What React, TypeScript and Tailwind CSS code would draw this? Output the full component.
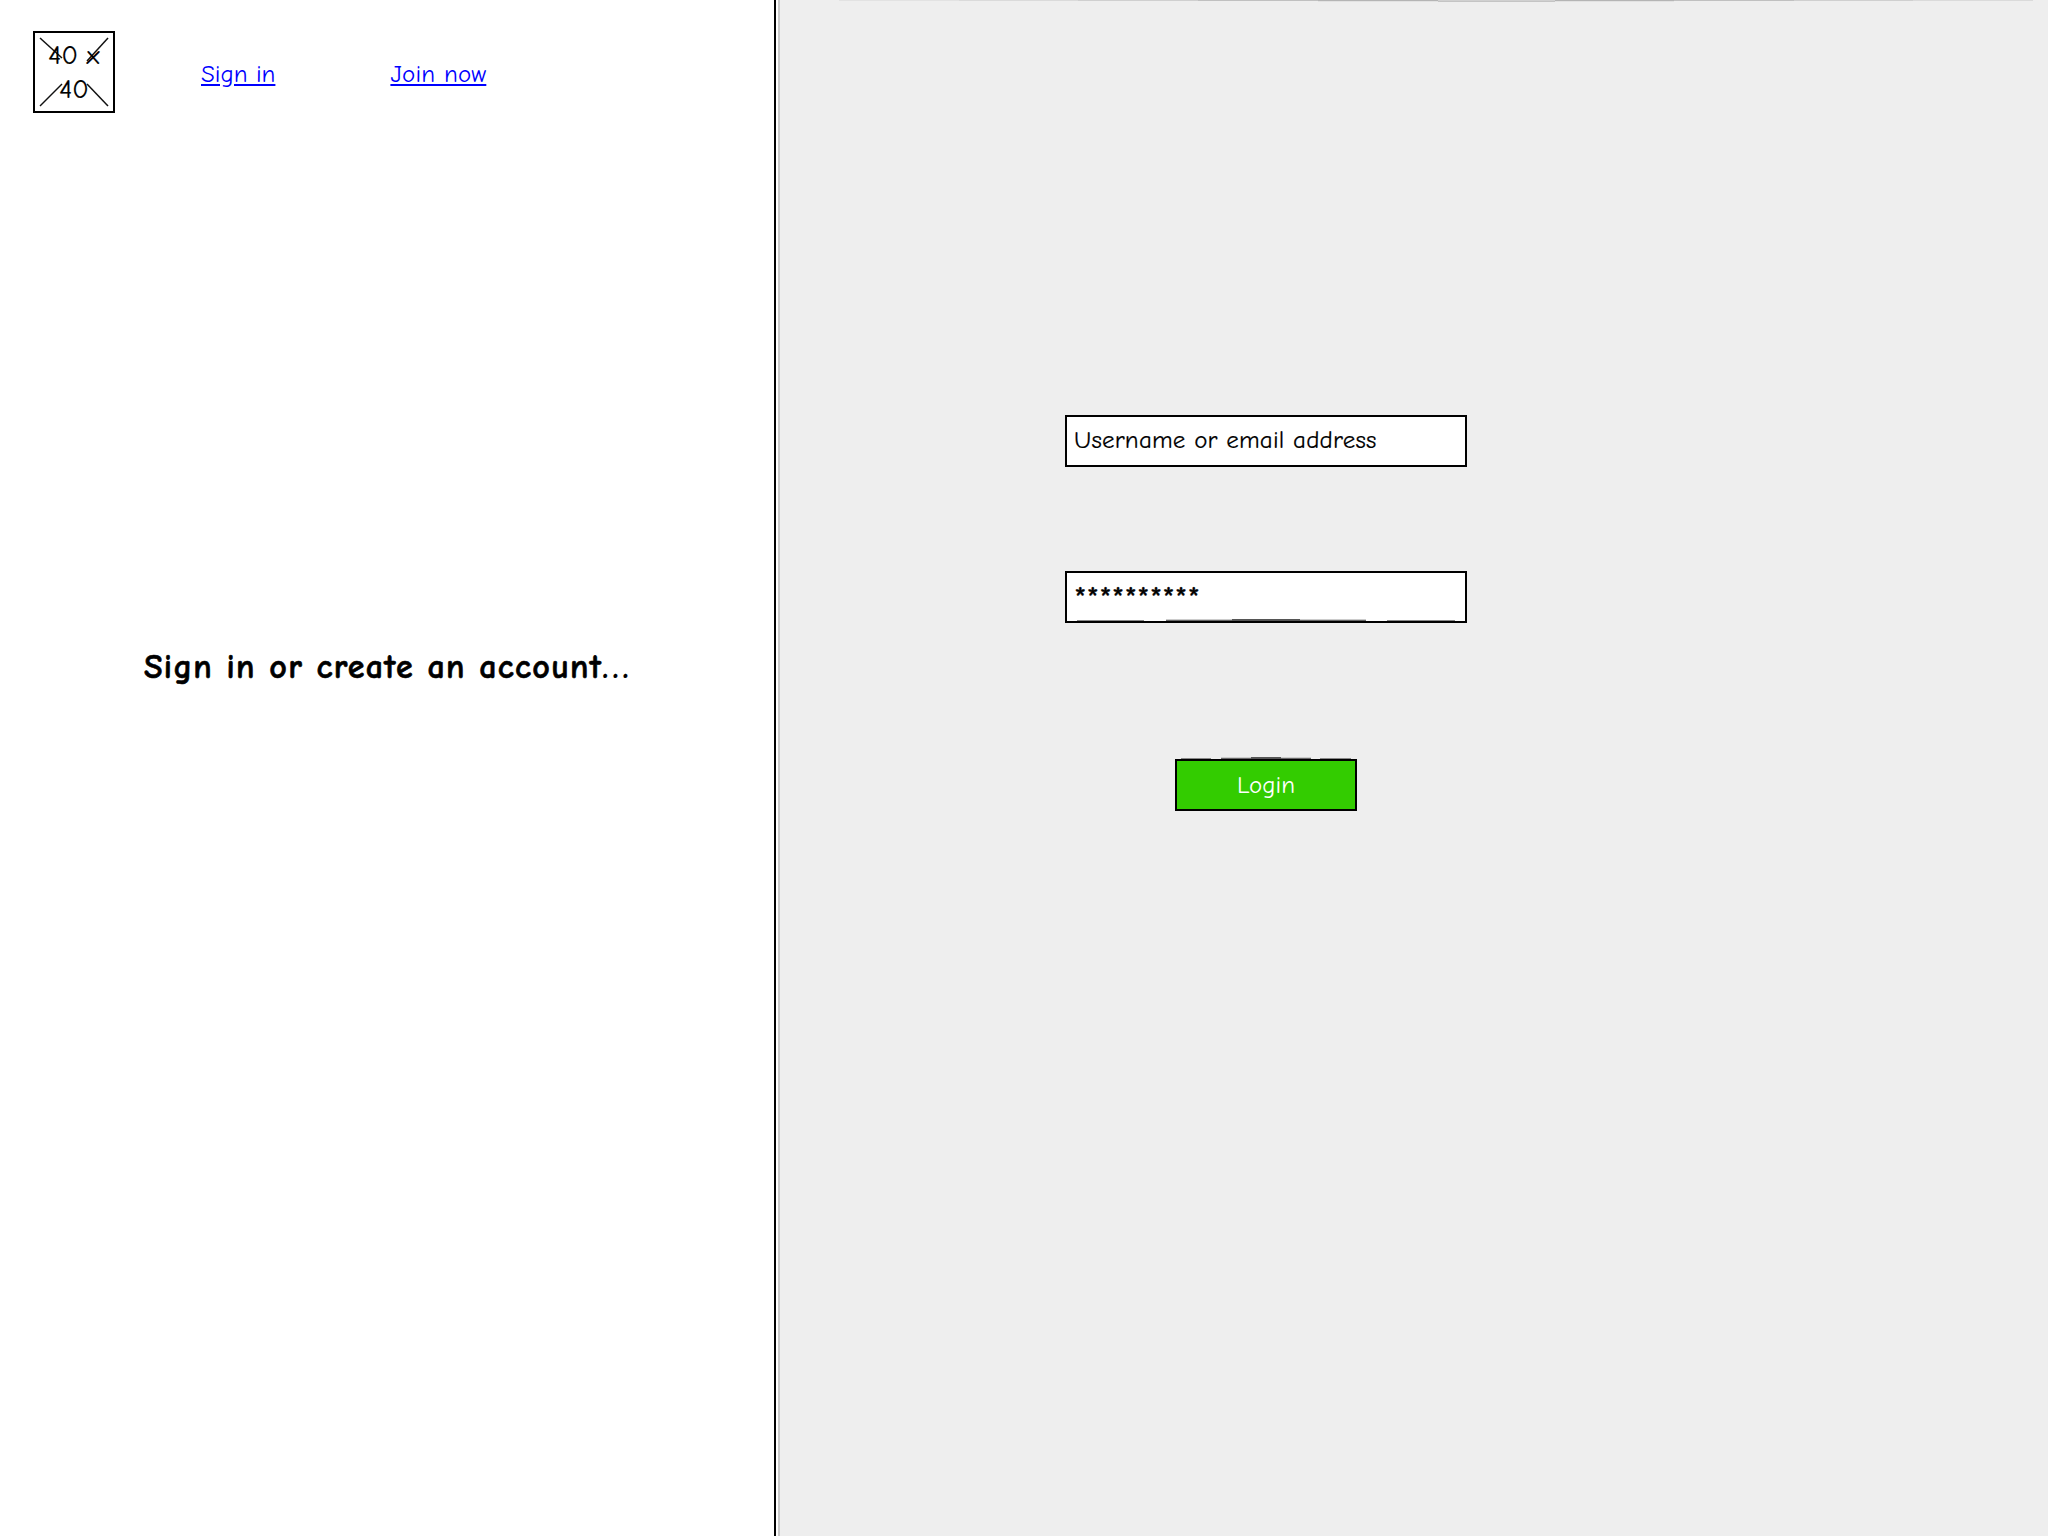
const sketchFont = "font-['Comic_Sans_MS','Comic_Neue','DejaVu_Sans',cursive]";

// segments of the top edge of the right panel: [x, y, width, colour]
const topEdge: [number, number, number, string][] = [
  [0, 0, 120, '#e2e2e2'],
  [120, 0, 119, '#dadada'],
  [239, 0, 120, '#cfcfcf'],
  [359, 0, 120, '#c0c0c0'],
  [479, 0, 120, '#b4b4b4'],
  [479, 1, 120, '#e2e2e2'],
  [599, 1, 117, '#c4c4c4'],
  [599, 0, 117, '#d0d0d0'],
  [716, 0, 119, '#b4b4b4'],
  [716, 1, 119, '#e2e2e2'],
  [835, 0, 120, '#c0c0c0'],
  [955, 0, 119, '#cfcfcf'],
  [1074, 0, 120, '#dadada'],
];

// sketchy curved edge of a wireframe box, drawn as shaded steps
const SketchEdge = ({ className }: { className: string }) => {
  return (
    <svg className={className} viewBox="0 0 100 2" preserveAspectRatio="none" shapeRendering="crispEdges">
      <rect x="0" y="1" width="17.6" height="1" fill="#888888" />
      <rect x="23.5" y="1" width="17.5" height="1" fill="#666666" />
      <rect x="23.5" y="0" width="17.5" height="1" fill="#cccccc" />
      <rect x="41" y="0" width="18" height="2" fill="#555555" />
      <rect x="59" y="1" width="17.5" height="1" fill="#666666" />
      <rect x="59" y="0" width="17.5" height="1" fill="#cccccc" />
      <rect x="82" y="1" width="18" height="1" fill="#888888" />
    </svg>
  );
};

const LogoPlaceholder = () => {
  return (
    <div className="relative flex h-[82px] w-[82px] items-center justify-center border-2 border-black bg-white">
      <svg className="absolute -left-[2px] -top-[2px] h-[82px] w-[82px]" viewBox="0 0 82 82" fill="none" stroke="#111" strokeWidth="1.5">
        <path d="M7 7 L29 27" />
        <path d="M75 7 L54 30" />
        <path d="M7 75 L29 53" />
        <path d="M75 75 L54 53" />
      </svg>
      <span className="relative w-[66px] pt-[2px] text-center text-[27px] leading-[34px] text-black [-webkit-text-stroke:0.2px_black]">40 x 40</span>
    </div>
  );
};

export default function App() {
  return (
    <div className={`flex h-[1536px] w-[2048px] overflow-hidden bg-white text-black ${sketchFont}`}>
      {/* 左パネル */}
      <div className="flex w-[774px] flex-col">
        <div className="flex items-center pl-[33px] pt-[31px]">
          <LogoPlaceholder />
          <a href="#" className="ml-[86px] mt-[3px] text-[25px] leading-[30px] text-[#0000ff] underline">Sign in</a>
          <a href="#" className="ml-[115px] mt-[3px] text-[25px] leading-[30px] tracking-[0.2px] text-[#0000ff] underline">Join now</a>
        </div>
        <h1 className="mt-[533px] pl-[144px] text-[34px] font-bold leading-[42px] tracking-[1.3px] [-webkit-text-stroke:0.6px_black]">
          Sign in or create an account<span className="tracking-[4px] [-webkit-text-stroke:0.2px_black]">...</span>
        </h1>
      </div>

      {/* 区切り線 */}
      <div className="w-[2px] bg-black" />
      <div className="w-[2px] bg-white" />
      <div className="w-[2px] bg-[#c8c8c8]" />

      {/* 右パネル */}
      <div className="relative flex-1 bg-[#eeeeee] pl-[285px] pt-[415px]">
        <svg className="absolute left-[59px] top-0 h-[2px] w-[1194px]" viewBox="0 0 1194 2" shapeRendering="crispEdges">
          {topEdge.map(([x, y, w, c]) => (
            <rect key={`${x}-${y}`} x={x} y={y} width={w} height={1} fill={c} />
          ))}
        </svg>
        <div className="flex h-[52px] w-[402px] items-center border-2 border-black bg-white pb-[2px] pl-[7px] text-[25px] tracking-[0.2px] [-webkit-text-stroke:0.2px_black]">Username or email address</div>
        <div className="relative mt-[104px] h-[52px] w-[402px] border-2 border-black bg-white pl-[7px] pt-[10px] text-[32px] leading-[32px] [-webkit-text-stroke:0.4px_black]">
          **********
          <SketchEdge className="absolute bottom-0 left-[10px] h-[2px] w-[378px]" />
        </div>
        <div className="relative ml-[110px] mt-[136px] h-[52px] w-[182px]">
          <SketchEdge className="absolute -top-[2px] left-[6px] h-[2px] w-[170px]" />
          <button className="h-full w-full border-2 border-black bg-[#33cc00] text-[25px] text-white">Login</button>
        </div>
      </div>
    </div>
  );
}
